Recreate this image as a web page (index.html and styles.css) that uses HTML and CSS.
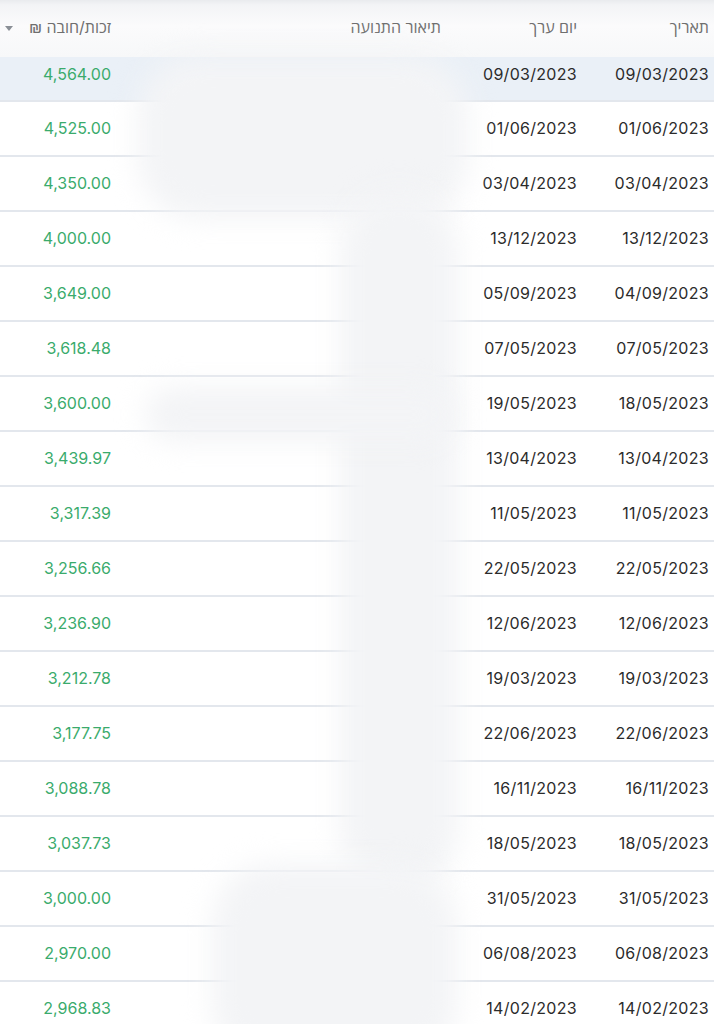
FILE: index.html
```html
<!DOCTYPE html>
<html lang="he" dir="rtl">
<head>
<meta charset="utf-8">
<title>תנועות</title>
<link rel="stylesheet" href="styles.css">
</head>
<body>
<div class="wrap">
  <table class="tx">
    <colgroup>
      <col class="w-date"><col class="w-val"><col class="w-desc"><col class="w-amt">
    </colgroup>
    <thead>
      <tr>
        <th class="c-date">תאריך</th>
        <th class="c-val">יום ערך</th>
        <th class="c-desc">תיאור התנועה</th>
        <th class="c-amt"><div class="amt-head"><span>זכות/חובה ₪</span><span class="caret"></span></div></th>
      </tr>
    </thead>
    <tbody>
      <tr class="first active"><td class="c-date"><span class="num">09/03/2023</span></td><td class="c-val"><span class="num">09/03/2023</span></td><td class="c-desc"></td><td class="c-amt"><span class="num">4,564.00</span></td></tr>
      <tr><td class="c-date"><span class="num">01/06/2023</span></td><td class="c-val"><span class="num">01/06/2023</span></td><td class="c-desc"></td><td class="c-amt"><span class="num">4,525.00</span></td></tr>
      <tr><td class="c-date"><span class="num">03/04/2023</span></td><td class="c-val"><span class="num">03/04/2023</span></td><td class="c-desc"></td><td class="c-amt"><span class="num">4,350.00</span></td></tr>
      <tr><td class="c-date"><span class="num">13/12/2023</span></td><td class="c-val"><span class="num">13/12/2023</span></td><td class="c-desc"></td><td class="c-amt"><span class="num">4,000.00</span></td></tr>
      <tr><td class="c-date"><span class="num">04/09/2023</span></td><td class="c-val"><span class="num">05/09/2023</span></td><td class="c-desc"></td><td class="c-amt"><span class="num">3,649.00</span></td></tr>
      <tr><td class="c-date"><span class="num">07/05/2023</span></td><td class="c-val"><span class="num">07/05/2023</span></td><td class="c-desc"></td><td class="c-amt"><span class="num">3,618.48</span></td></tr>
      <tr><td class="c-date"><span class="num">18/05/2023</span></td><td class="c-val"><span class="num">19/05/2023</span></td><td class="c-desc"></td><td class="c-amt"><span class="num">3,600.00</span></td></tr>
      <tr><td class="c-date"><span class="num">13/04/2023</span></td><td class="c-val"><span class="num">13/04/2023</span></td><td class="c-desc"></td><td class="c-amt"><span class="num">3,439.97</span></td></tr>
      <tr><td class="c-date"><span class="num">11/05/2023</span></td><td class="c-val"><span class="num">11/05/2023</span></td><td class="c-desc"></td><td class="c-amt"><span class="num">3,317.39</span></td></tr>
      <tr><td class="c-date"><span class="num">22/05/2023</span></td><td class="c-val"><span class="num">22/05/2023</span></td><td class="c-desc"></td><td class="c-amt"><span class="num">3,256.66</span></td></tr>
      <tr><td class="c-date"><span class="num">12/06/2023</span></td><td class="c-val"><span class="num">12/06/2023</span></td><td class="c-desc"></td><td class="c-amt"><span class="num">3,236.90</span></td></tr>
      <tr><td class="c-date"><span class="num">19/03/2023</span></td><td class="c-val"><span class="num">19/03/2023</span></td><td class="c-desc"></td><td class="c-amt"><span class="num">3,212.78</span></td></tr>
      <tr><td class="c-date"><span class="num">22/06/2023</span></td><td class="c-val"><span class="num">22/06/2023</span></td><td class="c-desc"></td><td class="c-amt"><span class="num">3,177.75</span></td></tr>
      <tr><td class="c-date"><span class="num">16/11/2023</span></td><td class="c-val"><span class="num">16/11/2023</span></td><td class="c-desc"></td><td class="c-amt"><span class="num">3,088.78</span></td></tr>
      <tr><td class="c-date"><span class="num">18/05/2023</span></td><td class="c-val"><span class="num">18/05/2023</span></td><td class="c-desc"></td><td class="c-amt"><span class="num">3,037.73</span></td></tr>
      <tr><td class="c-date"><span class="num">31/05/2023</span></td><td class="c-val"><span class="num">31/05/2023</span></td><td class="c-desc"></td><td class="c-amt"><span class="num">3,000.00</span></td></tr>
      <tr><td class="c-date"><span class="num">06/08/2023</span></td><td class="c-val"><span class="num">06/08/2023</span></td><td class="c-desc"></td><td class="c-amt"><span class="num">2,970.00</span></td></tr>
      <tr><td class="c-date"><span class="num">14/02/2023</span></td><td class="c-val"><span class="num">14/02/2023</span></td><td class="c-desc"></td><td class="c-amt"><span class="num">2,968.83</span></td></tr>
    </tbody>
  </table>
  <div class="smear" aria-hidden="true">
    <div class="blob blob-top"></div>
    <div class="blob blob-band"></div>
    <div class="blob blob-row7"></div>
    <div class="blob blob-bot"></div>
  </div>
</div>
</body>
</html>
```

FILE: styles.css
```css
html, body {
  margin: 0;
  padding: 0;
  background: #ffffff;
}

body {
  font-family: Inter, "Open Sans", "Liberation Sans", "DejaVu Sans", sans-serif;
  color: #2a2a2a;
  overflow: hidden;
}

.wrap {
  position: relative;
  width: 714px;
  margin-right: 10px;
  margin-left: auto;
}

.tx {
  width: 714px;
  table-layout: fixed;
  border-collapse: collapse;
  border-spacing: 0;
}

.w-date { width: 132px; }
.w-val { width: 136px; }
.w-desc { width: 330px; }
.w-amt { width: 116px; }

.tx th {
  height: 54px;
  padding: 0 5px 3px 5px;
  text-align: right;
  font-weight: 400;
  font-size: 16px;
  color: #6f6f6f;
  background: linear-gradient(#e9ebee 0, #f3f4f6 5px, #fbfbfc 26px, #f7f8f9 56px);
  vertical-align: middle;
}

.amt-head {
  display: flex;
  justify-content: space-between;
  align-items: center;
}

.caret {
  width: 0;
  height: 0;
  border-left: 4px solid transparent;
  border-right: 4px solid transparent;
  border-top: 5px solid #8a8f96;
  margin-top: 2px;
}

.tx td {
  height: 51px;
  padding: 0 5px 2px 5px;
  text-align: right;
  font-size: 16px;
  border-bottom: 2px solid #e3e7ed;
  vertical-align: middle;
  background: #ffffff;
}

.tx tr.first td {
  height: 33px;
  padding-bottom: 10px;
}

.tx tr.active td {
  background: #eaf0f7;
}

.num {
  direction: ltr;
  unicode-bidi: isolate;
  display: inline-block;
}

.c-date .num, .c-val .num {
  color: #2b2b2b;
  letter-spacing: 0.3px;
}

.c-amt .num {
  color: #3aab6c;
}

.smear {
  position: absolute;
  inset: 0;
  pointer-events: none;
  overflow: hidden;
}

.blob {
  position: absolute;
  background: #f3f4f6;
  filter: blur(14px);
  border-radius: 60px;
}

.blob-top {
  left: 138px;
  top: 54px;
  width: 330px;
  height: 165px;
}

.blob-band {
  left: 340px;
  top: 190px;
  width: 118px;
  height: 700px;
}

.blob-row7 {
  left: 145px;
  top: 387px;
  width: 310px;
  height: 55px;
}

.blob-bot {
  left: 212px;
  top: 864px;
  width: 245px;
  height: 200px;
}
```
